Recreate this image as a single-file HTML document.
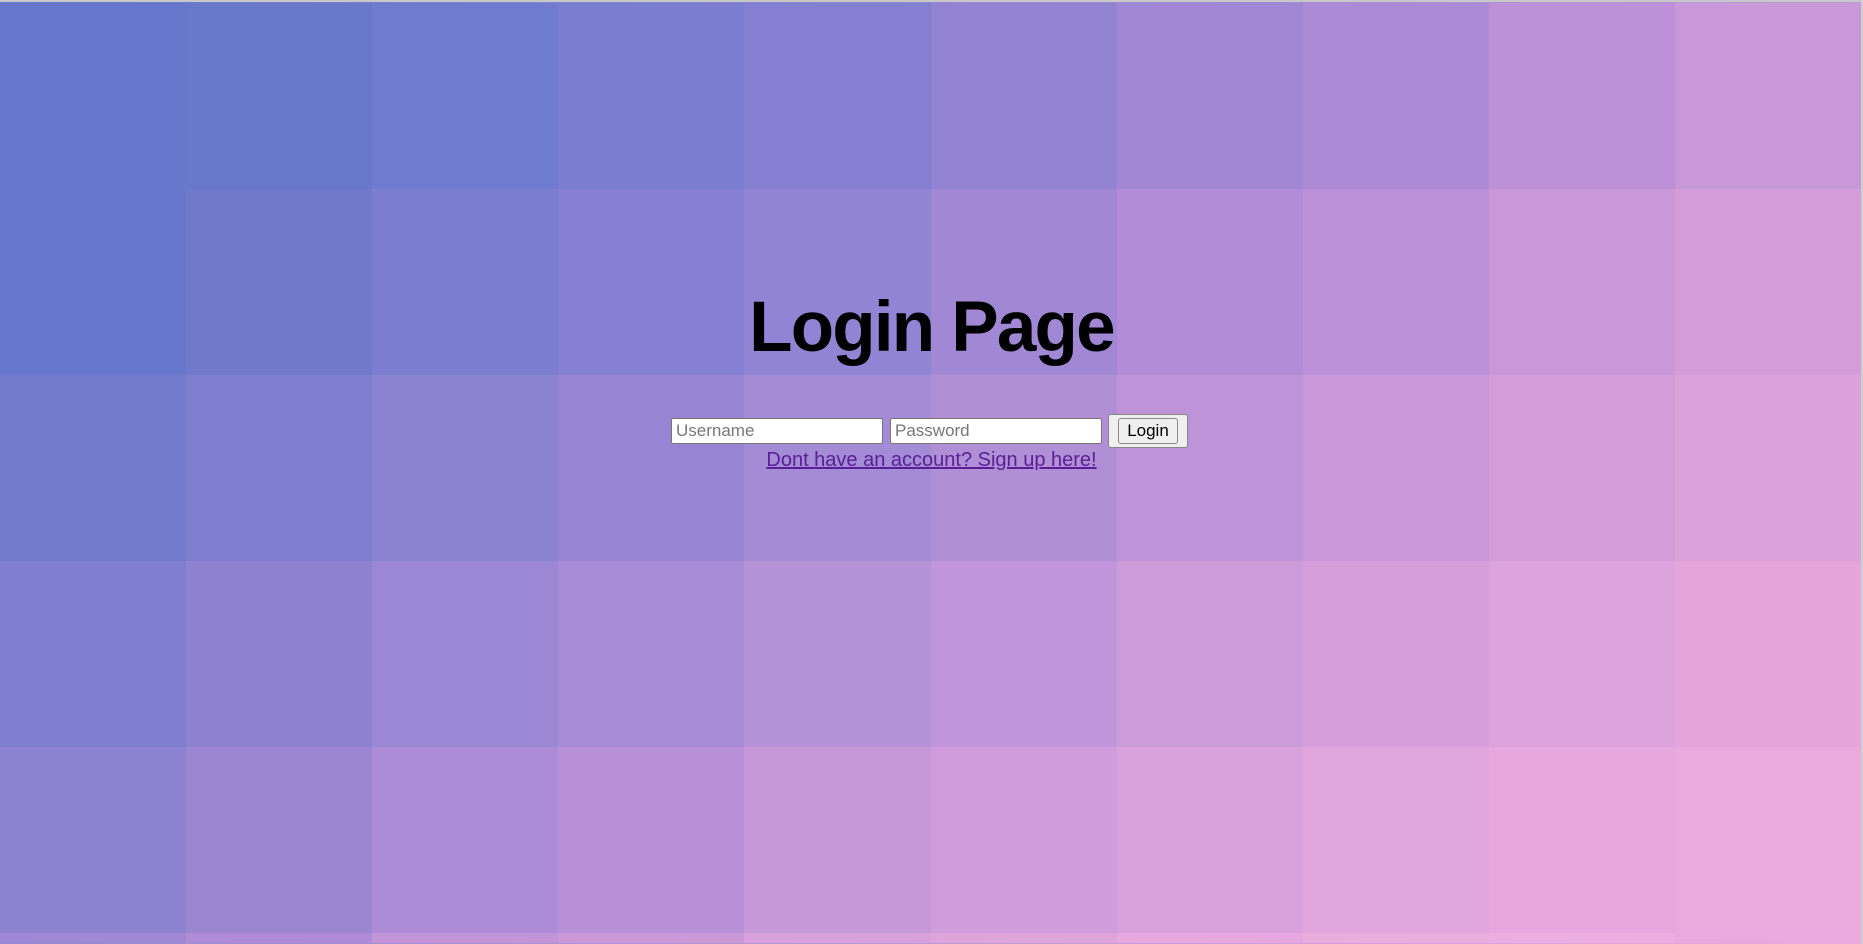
<!DOCTYPE html>
<html><head><meta charset="utf-8"><style>
html,body{margin:0;padding:0;width:1863px;height:944px;overflow:hidden}
body{position:relative;background:linear-gradient(135deg,#6677cc,#eaaade);font-family:"Liberation Sans",Arial,sans-serif}
#grid{position:absolute;left:0;top:3px;width:1861px;height:941px;overflow:hidden}
#grid div{position:absolute}
#topline{position:absolute;left:0;top:0;width:1863px;height:2px;background:#c8c8c8}
#rline{position:absolute;right:0;top:0;width:2px;height:944px;background:#d0d0d0}
h1{position:absolute;left:0;width:1863px;top:278px;margin:0;text-align:center;font-size:71px;font-weight:bold;letter-spacing:-1.8px;color:#000;line-height:100px}
.row{position:absolute;top:414px;left:0;width:1863px;height:34px}
input{position:absolute;top:4px;height:26px;width:212px;box-sizing:border-box;border:1px solid #767676;border-radius:2px;font-family:"Liberation Sans",Arial,sans-serif;font-size:17px;padding:0 4px;background:#fff;outline:none}
input::placeholder{color:#777}
.box{position:absolute;left:1108px;top:0;width:80px;height:34px;box-sizing:border-box;border:1px solid #888;border-radius:3px;background:#efefef}
.btn{position:absolute;left:9px;top:3px;width:60px;height:26px;box-sizing:border-box;border:1px solid #888;border-radius:3px;background:#efefef;font-size:17px;line-height:24px;text-align:center;color:#000}
a{position:absolute;top:448px;left:0;width:1863px;text-align:center;font-size:20px;color:#5a1f94;line-height:24px}
a span{text-decoration:underline}
</style></head><body>
<div id="grid"></div>
<div id="topline"></div><div id="rline"></div>
<h1>Login Page</h1>
<div class="row">
<input style="left:671px" placeholder="Username">
<input style="left:890px" placeholder="Password">
<div class="box"><div class="btn">Login</div></div>
</div>
<a><span>Dont have an account? Sign up here!</span></a>
<script>
var r0=["6677cc","6879cc","6f7bce","7a7dd0","847fd0","9284d2","a088d4","ad8ad6","bd90d8","c898d8"];
var r1=["6777cc","7179cc","7a7dd0","8680d2","9284d4","a088d4","b28cd6","bc90d8","ca98d8","d49cd8"];
var r4=["8c82d0","9c86d2","ac8cd6","b890d8","c698da","d09cdc","d9a2dc","e2a6de","e6a8de","eaaade"];
var r5=["a088d4","b08cd8","c294d8","cc98d8","d8a0dc","dea4dc","e6a8de","eaaede","ecaee0","eaaae0"];
function h(s){return [parseInt(s.substr(0,2),16),parseInt(s.substr(2,2),16),parseInt(s.substr(4,2),16)]}
function mix(a,b,t){var A=h(a),B=h(b);return "rgb("+A.map(function(v,k){return Math.round(v+(B[k]-v)*t)}).join(",")+")"}
var rows=[r0,r1,null,null,r4,r5],g=document.getElementById("grid"),W=186.1,H=186;
for(var j=0;j<6;j++)for(var i=0;i<10;i++){var c;
if(j==2)c=mix(r1[i],r4[i],1/3);else if(j==3)c=mix(r1[i],r4[i],2/3);else c="#"+rows[j][i];
var d=document.createElement("div");d.style.left=Math.round(i*W)+"px";d.style.top=Math.round(j*H)+"px";
d.style.width=(Math.round((i+1)*W)-Math.round(i*W))+"px";d.style.height=(j==5?10:H)+"px";d.style.background=c;g.appendChild(d);}
</script>
</body></html>
